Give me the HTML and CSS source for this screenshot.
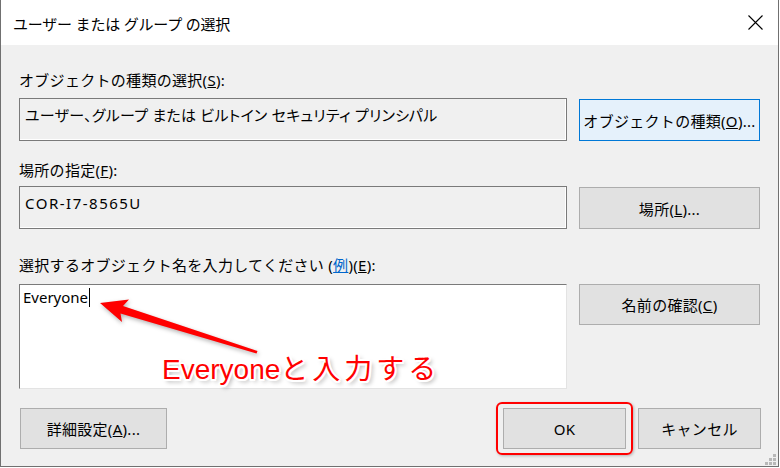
FILE: index.html
```html
<!DOCTYPE html>
<html lang="ja">
<head>
  <meta charset="UTF-8" />
  <title>ユーザー または グループ の選択</title>
  <link rel="stylesheet" href="styles.css">
</head>
<body>
  <div class="page">
    <!-- Dialog window -->
    <div class="window">
      <div class="titlebar">
        <span class="title">ユーザー または グループ の選択</span>
        <svg class="close" width="15" height="15" viewBox="0 0 15 15">
          <path d="M0.5 0.5 L14.5 14.5 M14.5 0.5 L0.5 14.5" stroke="#000" stroke-width="1.1" fill="none" />
        </svg>
      </div>

      <div class="content">
        <div class="label label-first">オブジェクトの種類の選択(<u>S</u>):</div>
        <div class="row row-type">
          <div class="field field-narrow">ユーザー、グループ または ビルトイン セキュリティ プリンシパル</div>
          <button class="btn btn-focus">オブジェクトの種類(<u>O</u>)...</button>
        </div>

        <div class="label label-location">場所の指定(<u>F</u>):</div>
        <div class="row row-location">
          <div class="field field-wide">COR-I7-8565U</div>
          <button class="btn">場所(<u>L</u>)...</button>
        </div>

        <div class="label label-names">選択するオブジェクト名を入力してください (<a class="link" href="#">例</a>)(<u>E</u>):</div>
        <div class="row row-names">
          <div class="textbox">Everyone<span class="caret"></span></div>
          <button class="btn btn-short">名前の確認(<u>C</u>)</button>
        </div>

        <div class="footer">
          <button class="btn btn-advanced">詳細設定(<u>A</u>)...</button>
          <div class="footer-right">
            <div class="marked">
              <button class="btn btn-footer">OK</button>
            </div>
            <button class="btn btn-footer">キャンセル</button>
          </div>
        </div>
      </div>
    </div>

    <!-- resize grip -->
    <svg class="grip" width="12" height="12" viewBox="0 0 12 12">
      <rect x="8" y="0" width="3" height="3" fill="#b8b8b8" />
      <rect x="4" y="4" width="3" height="3" fill="#b8b8b8" />
      <rect x="8" y="4" width="3" height="3" fill="#b8b8b8" />
      <rect x="0" y="8" width="3" height="3" fill="#b8b8b8" />
      <rect x="4" y="8" width="3" height="3" fill="#b8b8b8" />
      <rect x="8" y="8" width="3" height="3" fill="#b8b8b8" />
    </svg>

    <!-- annotation -->
    <svg class="arrow" width="780" height="468" viewBox="0 0 780 468">
      <polygon points="100,303 129,299.5 123,306 257.5,351 256.5,353.5 120.5,313.5 122,322" fill="#ff0000" />
    </svg>
    <div class="callout">Everyone<span class="callout-jp">と入力する</span></div>
  </div>
</body>
</html>
```

FILE: styles.css
```css
body {
  margin: 0;
  background-color: #ffffff;
  font-family: "Noto Sans", "Noto Sans CJK JP", sans-serif;
  font-size: 15px;
  color: #000000;
}
.page {
  position: relative;
  width: 780px;
  height: 468px;
  overflow: hidden;
}
.window {
  box-sizing: border-box;
  width: 779px;
  height: 467px;
  border: 1px solid #707070;
  border-top: none;
  background-color: #f0f0f0;
}
.titlebar {
  height: 45px;
  background-color: #ffffff;
  display: flex;
  align-items: center;
  justify-content: space-between;
  padding: 2px 15px 0 12px;
  box-sizing: border-box;
}
.title {
  line-height: 20px;
  letter-spacing: -0.2px;
}
.close {
  display: block;
  margin-top: -2px;
}
.content {
  padding: 25px 17px 0 18px;
}
.label {
  line-height: 20px;
  height: 20px;
  white-space: nowrap;
  letter-spacing: 0.3px;
}
.label-first {
  margin-bottom: 8px;
}
.label-location {
  margin-bottom: 6px;
}
.label-names {
  margin-bottom: 9px;
}
.link {
  color: #0066cc;
}
.row {
  display: grid;
  grid-template-columns: 548px 181px;
  column-gap: 12px;
  align-items: start;
}
.row-type {
  margin-bottom: 19px;
}
.row-location {
  margin-bottom: 26px;
}
.row-names {
  margin-bottom: 19px;
}
.field {
  box-sizing: border-box;
  height: 43px;
  padding: 6px 5px 0;
  line-height: 20px;
  border: 1px solid #7a7a7a;
  box-shadow: inset -1px -1px 0 #ffffff;
  white-space: nowrap;
}
.field-narrow {
  font-feature-settings: "palt";
  letter-spacing: 0.25px;
}
.field-wide {
  letter-spacing: 1.5px;
}
.textbox {
  box-sizing: border-box;
  height: 105px;
  padding: 2px 3px 0;
  line-height: 20px;
  background-color: #ffffff;
  border: 1px solid #e3e3e3;
  border-top-color: #7a7a7a;
  border-left-color: #7a7a7a;
}
.caret {
  display: inline-block;
  width: 1px;
  height: 19px;
  margin-left: 1px;
  vertical-align: -4px;
  background-color: #000000;
}
.btn {
  box-sizing: border-box;
  height: 42px;
  margin-top: 1px;
  padding: 0;
  font-family: inherit;
  font-size: 15px;
  color: #000000;
  background-color: #e1e1e1;
  border: 1px solid #adadad;
  white-space: nowrap;
  letter-spacing: 0.3px;
}
.btn-focus {
  background-color: #e5f1fb;
  border-color: #0078d7;
}
.btn-short {
  height: 41px;
  margin-top: 0;
}
.footer {
  display: flex;
  justify-content: space-between;
}
.btn-advanced {
  width: 147px;
  height: 41px;
  margin: 0 0 0 1px;
}
.footer-right {
  display: flex;
  gap: 12px;
}
.btn-footer {
  width: 123px;
  height: 41px;
  margin: 0;
}
.marked {
  position: relative;
}
.marked::after {
  content: "";
  position: absolute;
  left: -7px;
  top: -6px;
  right: -7px;
  bottom: -6px;
  border: 2px solid #ff0000;
  border-radius: 6px;
  box-shadow: 1px 1px 3px rgba(0, 0, 0, 0.25);
}
.grip {
  position: absolute;
  left: 765px;
  top: 454px;
}
.arrow {
  position: absolute;
  left: 0;
  top: 0;
  filter: drop-shadow(1px 2px 2px rgba(0, 0, 0, 0.3));
}
.callout {
  position: absolute;
  left: 162px;
  top: 351px;
  font-family: "Liberation Sans", "Noto Sans CJK JP", sans-serif;
  font-size: 28px;
  line-height: 32px;
  color: #ff0000;
  white-space: nowrap;
  text-shadow: 2px 0 #fff, -2px 0 #fff, 0 2px #fff, 0 -2px #fff,
    1.5px 1.5px #fff, -1.5px -1.5px #fff, 1.5px -1.5px #fff, -1.5px 1.5px #fff,
    3px 3px 4px rgba(0, 0, 0, 0.35);
}
.callout-jp {
  font-family: "Noto Sans CJK JP", sans-serif;
  letter-spacing: 4px;
}
```
